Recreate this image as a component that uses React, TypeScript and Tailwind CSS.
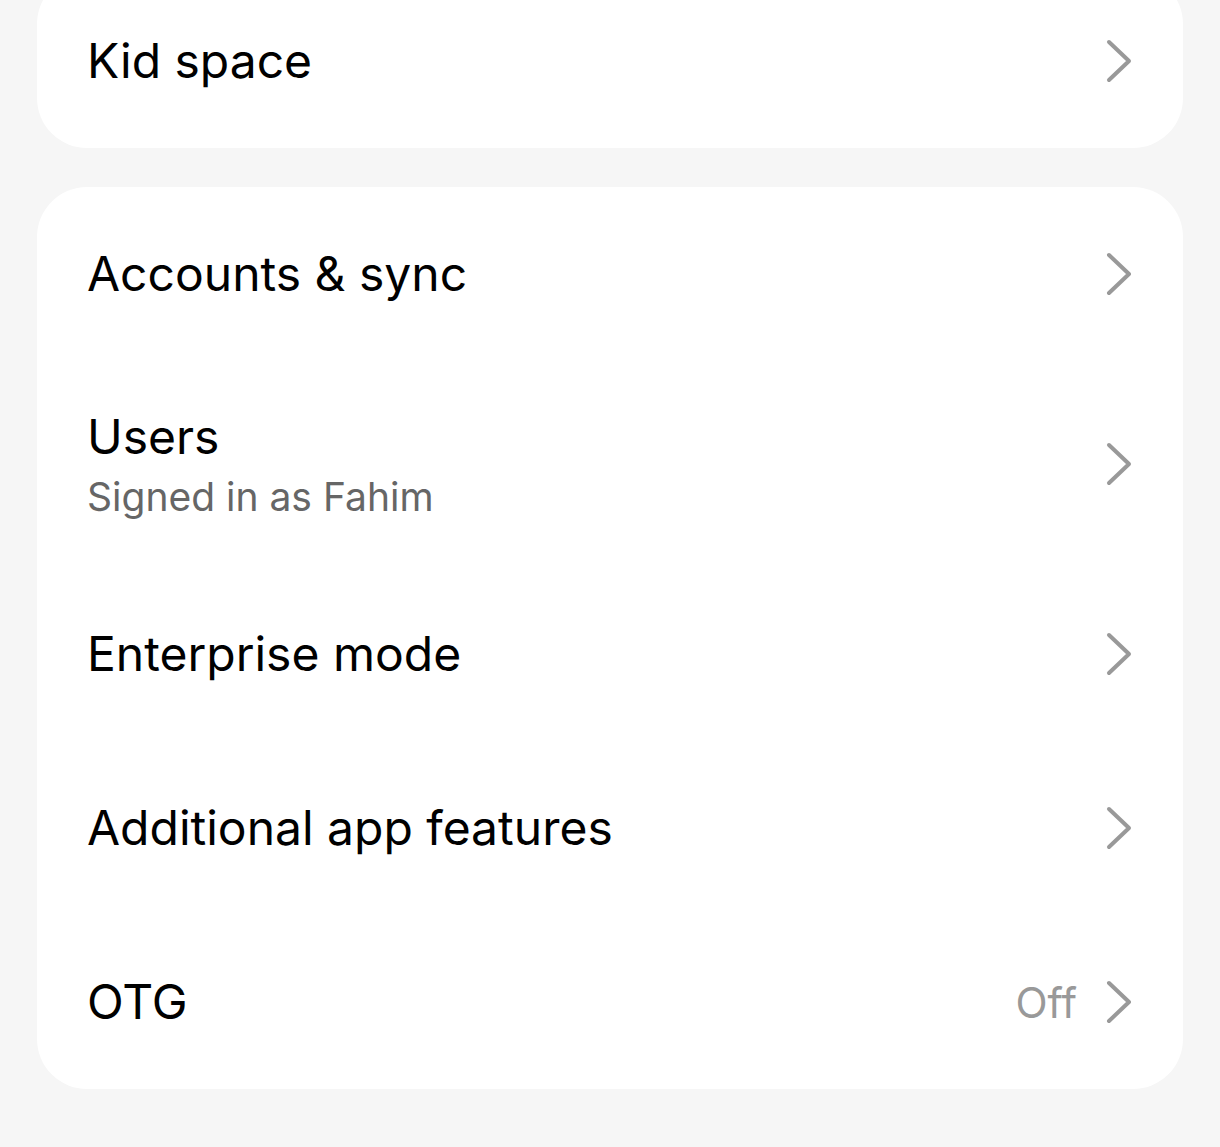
const Chevron = () => (
  <svg width="28" height="46" viewBox="0 0 28 46" fill="none" className="shrink-0">
    <path d="M4 4 L24 23 L4 42" stroke="#999999" strokeWidth="4" strokeLinecap="round" strokeLinejoin="round" />
  </svg>
);

type Row = { title: string; subtitle?: string; value?: string };

const rows: Row[] = [
  { title: "Accounts & sync" },
  { title: "Users", subtitle: "Signed in as Fahim" },
  { title: "Enterprise mode" },
  { title: "Additional app features" },
  { title: "OTG", value: "Off" },
];

function SettingRow({ title, subtitle, value }: Row) {
  return (
    <div
      className={`flex items-center justify-between pl-[50px] pr-[50px] ${
        subtitle ? "h-[206px]" : "h-[174px]"
      }`}
    >
      <div className={`flex flex-col ${subtitle ? "pt-[6px]" : ""}`}>
        <span className="text-[48px] leading-[60px] text-black">{title}</span>
        {subtitle && <span className="text-[39px] leading-[60px] text-[#666666]">{subtitle}</span>}
      </div>
      <div className="flex items-center gap-[28px]">
        {value && <span className="text-[42px] text-[#999999]">{value}</span>}
        <Chevron />
      </div>
    </div>
  );
}

export default function App() {
  return (
    <div className="h-[1147px] overflow-hidden bg-[#f6f6f6] px-[37px] font-['Inter',sans-serif]">
      <div className="-mt-[26px] rounded-[50px] bg-white">
        <SettingRow title="Kid space" />
      </div>
      <div className="mt-[39px] rounded-[50px] bg-white">
        {rows.map((r) => (
          <SettingRow key={r.title} {...r} />
        ))}
      </div>
    </div>
  );
}
